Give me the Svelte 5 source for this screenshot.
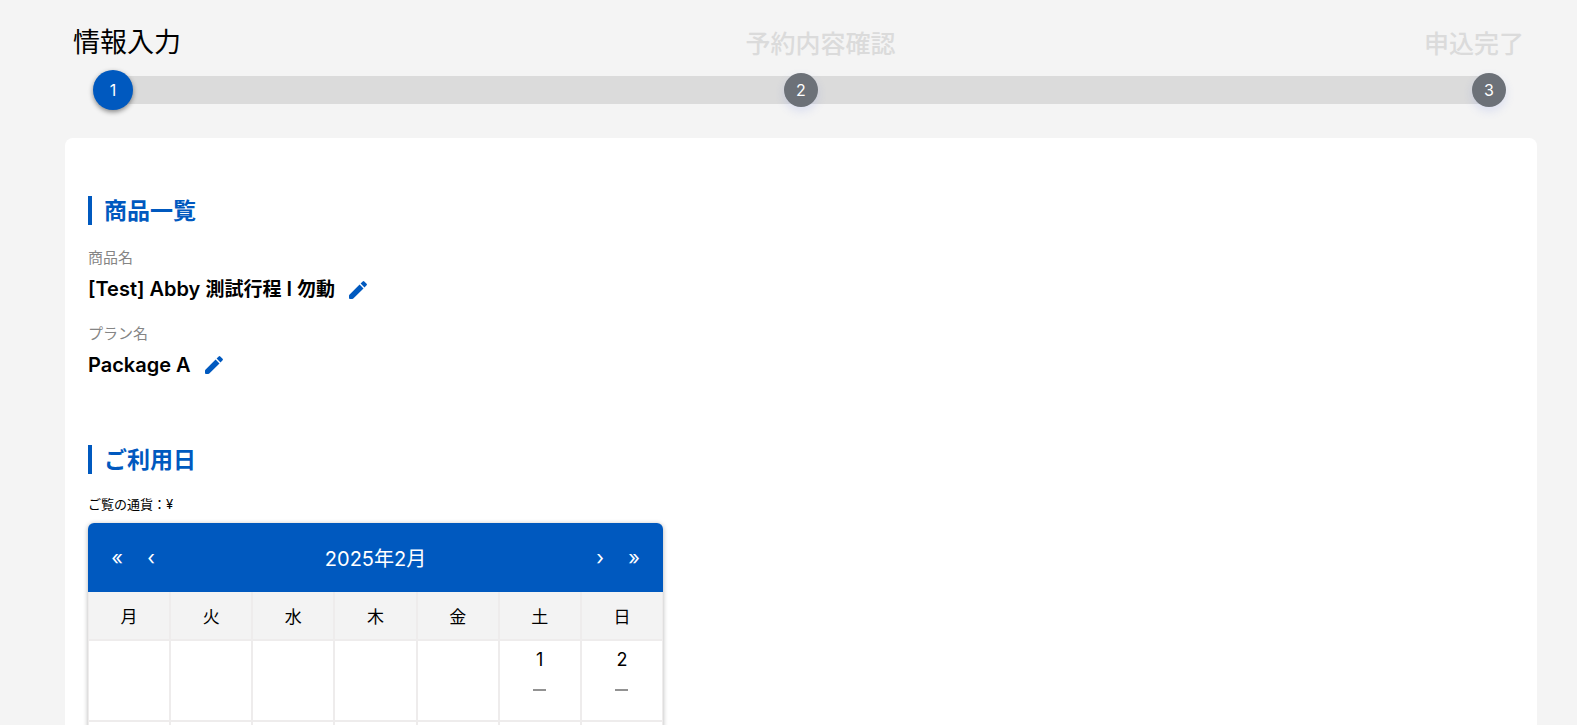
<script>
  const steps = ['情報入力', '予約内容確認', '申込完了'];
  const weekdays = ['月', '火', '水', '木', '金', '土', '日'];
  const product = [
    {
      label: '商品名',
      value: [
        { text: '[Test] Abby ' },
        { text: '測試行程', cjk: true },
        { text: ' I ' },
        { text: '勿動', cjk: true },
      ],
    },
    { label: 'プラン名', value: [{ text: 'Package A' }] },
  ];
  const days = Array.from({ length: 28 }, (_, i) => i + 1);
  const cells = [...Array(5).fill(null), ...days, null, null];
  const weeks = Array.from({ length: 5 }, (_, i) => cells.slice(i * 7, i * 7 + 7));
</script>

<main>
  <nav aria-label="予約手順">
    <div class="labels">
      {#each steps as step, i}
        <span class:active={i === 0}>{step}</span>
      {/each}
    </div>
    <ol class="track">
      {#each steps as step, i}
        <li class:active={i === 0}>{i + 1}</li>
      {/each}
    </ol>
  </nav>

  <div class="card">
    <section>
      <h2>商品一覧</h2>
      <dl>
        {#each product as item}
          <div>
            <dt>{item.label}</dt>
            <dd>
              <span class="value">{#each item.value as part}<span class:cjk={part.cjk}>{part.text}</span>{/each}</span>
              <button type="button" class="edit" aria-label="{item.label}を編集">
                <svg viewBox="3 3 18 18" width="18" height="18" aria-hidden="true">
                  <path d="M3.4 16.7 13.6 6.5 17.5 10.4 7.3 20.6Q6.9 21 6.3 21H4Q3 21 3 20V17.7Q3 17.1 3.4 16.7ZM20.6 7.3 18.5 9.4 14.6 5.5 16.7 3.4Q17.5 2.7 18.3 3.4L20.6 5.7Q21.3 6.5 20.6 7.3Z" fill="currentColor" />
                </svg>
              </button>
            </dd>
          </div>
        {/each}
      </dl>
    </section>

    <section>
      <h2>ご利用日</h2>
      <p class="currency">ご覧の通貨：¥</p>
      <div class="calendar">
        <div class="toolbar">
          <button type="button" aria-label="前年">«</button>
          <button type="button" aria-label="前月">‹</button>
          <span class="month">2025年2月</span>
          <button type="button" aria-label="翌月">›</button>
          <button type="button" aria-label="翌年">»</button>
        </div>
        <table>
          <thead>
            <tr>
              {#each weekdays as day}
                <th scope="col">{day}</th>
              {/each}
            </tr>
          </thead>
          <tbody>
            {#each weeks as week}
              <tr>
                {#each week as day}
                  <td>
                    {#if day}
                      <span class="day">{day}</span>
                      <span class="dash"></span>
                    {/if}
                  </td>
                {/each}
              </tr>
            {/each}
          </tbody>
        </table>
      </div>
    </section>
  </div>
</main>

<style>
  :global(body) {
    background: #f4f4f4;
    color: #000;
    font-family: Inter, 'Noto Sans CJK JP', sans-serif;
  }

  main {
    padding: 24px 40px 40px 65px;
  }

  .labels {
    display: flex;
    justify-content: space-between;
    align-items: flex-end;
    padding: 0 13px 0 8px;
    color: #dbdbdb;
    font-size: 25px;
    font-weight: 500;
    line-height: 36px;
  }

  .labels .active {
    padding-right: 36px;
    color: #000;
    font-size: 27px;
    font-weight: 400;
    line-height: 38px;
  }

  .track {
    display: flex;
    justify-content: space-between;
    align-items: center;
    height: 28px;
    margin: 14px 48px 34px;
    padding: 0;
    background: #dbdbdb;
    list-style: none;
  }

  .track li {
    width: 34px;
    height: 34px;
    margin: 0 -17px;
    border-radius: 50%;
    background: #6c7178;
    box-shadow: 0 4px 10px rgba(90, 110, 220, 0.16);
    color: #fff;
    font-size: 16px;
    line-height: 34px;
    text-align: center;
  }

  .track .active {
    width: 40px;
    height: 40px;
    margin: 0 -20px;
    background: #0059bf;
    box-shadow: 0 2px 5px rgba(0, 0, 0, 0.45);
    line-height: 40px;
  }

  .card {
    padding: 58px 23px 40px;
    border-radius: 8px;
    background: #fff;
  }

  h2 {
    margin: 0;
    padding: 2px 0 0 12px;
    border-left: 4px solid #0059bf;
    color: #0059bf;
    font-size: 23px;
    font-weight: 600;
    line-height: 27px;
  }

  dl {
    display: grid;
    gap: 20px;
    margin: 22px 0 67px;
  }

  dt {
    color: #858585;
    font-size: 15px;
    line-height: 22px;
  }

  dd {
    display: flex;
    align-items: center;
    gap: 14px;
    margin: 7px 0 0;
    font-size: 20px;
    font-weight: 600;
    line-height: 26px;
  }

  .value {
    white-space: pre-wrap;
  }

  .cjk {
    font-size: 19px;
  }

  button {
    padding: 0;
    border: 0;
    background: none;
    font-family: inherit;
    cursor: pointer;
  }

  .edit {
    display: flex;
    color: #0059bf;
  }

  .currency {
    margin: 20px 0 9px;
    font-size: 13px;
    line-height: 20px;
  }

  .calendar {
    max-width: 575px;
    border-radius: 6px;
    box-shadow: 0 1px 5px rgba(0, 0, 0, 0.3);
    overflow: hidden;
  }

  .toolbar {
    display: flex;
    align-items: center;
    height: 69px;
    padding: 0 12px;
    background: #0059bf;
    color: #fff;
  }

  .toolbar button {
    width: 34px;
    color: inherit;
    font-size: 20px;
    line-height: 34px;
  }

  .month {
    flex: 1;
    font-size: 20px;
    text-align: center;
  }

  table {
    width: 100%;
    border-collapse: separate;
    border-spacing: 0;
    table-layout: fixed;
    background: #fff;
  }

  th,
  td {
    border: 1px solid #eeecec;
    padding: 0;
  }

  th {
    height: 47px;
    border-top: 0;
    background: #f3f3f3;
    font-size: 17px;
    font-weight: 400;
  }

  td {
    height: 79px;
    vertical-align: top;
    text-align: center;
  }

  .day {
    display: block;
    padding-top: 5px;
    font-size: 18px;
    line-height: 28px;
  }

  .dash {
    display: block;
    width: 13px;
    height: 2px;
    margin: 15px auto 0;
    background: #929292;
  }
</style>
